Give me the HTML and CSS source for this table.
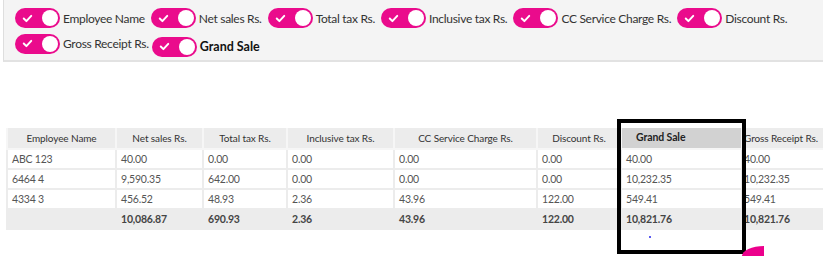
FILE: index.html
```html
<!DOCTYPE html>
<html lang="en">
  <head>
    <meta charset="UTF-8" />
    <title>Sales Report</title>
    <link rel="stylesheet" href="styles.css">
  </head>
  <body>
    <!-- Column toggles -->
    <div class="toggle-panel">
      <label class="toggle-item">
        <span class="switch"><svg class="tick" viewBox="0 0 14 12"><polyline points="2,6 5.5,9.5 12,2.5" /></svg><span class="knob"></span></span>
        <span class="toggle-label">Employee Name</span>
      </label>
      <label class="toggle-item">
        <span class="switch"><svg class="tick" viewBox="0 0 14 12"><polyline points="2,6 5.5,9.5 12,2.5" /></svg><span class="knob"></span></span>
        <span class="toggle-label">Net sales Rs.</span>
      </label>
      <label class="toggle-item">
        <span class="switch"><svg class="tick" viewBox="0 0 14 12"><polyline points="2,6 5.5,9.5 12,2.5" /></svg><span class="knob"></span></span>
        <span class="toggle-label">Total tax Rs.</span>
      </label>
      <label class="toggle-item">
        <span class="switch"><svg class="tick" viewBox="0 0 14 12"><polyline points="2,6 5.5,9.5 12,2.5" /></svg><span class="knob"></span></span>
        <span class="toggle-label">Inclusive tax Rs.</span>
      </label>
      <label class="toggle-item">
        <span class="switch"><svg class="tick" viewBox="0 0 14 12"><polyline points="2,6 5.5,9.5 12,2.5" /></svg><span class="knob"></span></span>
        <span class="toggle-label">CC Service Charge Rs.</span>
      </label>
      <label class="toggle-item">
        <span class="switch"><svg class="tick" viewBox="0 0 14 12"><polyline points="2,6 5.5,9.5 12,2.5" /></svg><span class="knob"></span></span>
        <span class="toggle-label">Discount Rs.</span>
      </label>
      <label class="toggle-item">
        <span class="switch"><svg class="tick" viewBox="0 0 14 12"><polyline points="2,6 5.5,9.5 12,2.5" /></svg><span class="knob"></span></span>
        <span class="toggle-label">Gross Receipt Rs.</span>
      </label>
      <label class="toggle-item toggle-new">
        <span class="switch"><svg class="tick" viewBox="0 0 14 12"><polyline points="2,6 5.5,9.5 12,2.5" /></svg><span class="knob"></span></span>
        <span class="toggle-label">Grand Sale</span>
      </label>
    </div>

    <!-- Report table -->
    <div class="report">
      <table class="report-table">
        <colgroup>
          <col style="width: 109px" />
          <col style="width: 87px" />
          <col style="width: 84px" />
          <col style="width: 107px" />
          <col style="width: 143px" />
          <col style="width: 84px" />
          <col style="width: 121px" />
          <col style="width: 86px" />
        </colgroup>
        <thead>
          <tr>
            <th>Employee Name</th>
            <th>Net sales Rs.</th>
            <th>Total tax Rs.</th>
            <th>Inclusive tax Rs.</th>
            <th>CC Service Charge Rs.</th>
            <th>Discount Rs.</th>
            <th class="grand-head">Grand Sale</th>
            <th class="gross">Gross Receipt Rs.</th>
          </tr>
        </thead>
        <tbody>
          <tr>
            <td>ABC 123</td><td>40.00</td><td>0.00</td><td>0.00</td><td>0.00</td><td>0.00</td><td class="grand">40.00</td><td class="gross">40.00</td>
          </tr>
          <tr>
            <td>6464 4</td><td>9,590.35</td><td>642.00</td><td>0.00</td><td>0.00</td><td>0.00</td><td class="grand">10,232.35</td><td class="gross">10,232.35</td>
          </tr>
          <tr>
            <td>4334 3</td><td>456.52</td><td>48.93</td><td>2.36</td><td>43.96</td><td>122.00</td><td class="grand">549.41</td><td class="gross">549.41</td>
          </tr>
        </tbody>
        <tfoot>
          <tr>
            <td></td><td>10,086.87</td><td>690.93</td><td>2.36</td><td>43.96</td><td>122.00</td><td class="grand">10,821.76</td><td class="gross">10,821.76</td>
          </tr>
        </tfoot>
      </table>
    </div>

    <!-- Highlight overlay -->
    <div class="highlight-box"></div>
    <div class="stray-dot"></div>
    <div class="fab-corner"></div>
  </body>
</html>
```

FILE: styles.css
```css
/* Base */
* {
  margin: 0;
  padding: 0;
  box-sizing: border-box;
}

body {
  font-family: Lato, "Open Sans", sans-serif;
  background: #ffffff;
  color: #444;
  overflow: hidden;
  width: 823px;
  height: 275px;
  position: relative;
}

/* Toggle panel */
.toggle-panel {
  margin-left: 3px;
  height: 62px;
  background: #f4f4f4;
  border-left: 1px solid #dedede;
  border-bottom: 2px solid #e2e2e2;
  padding: 8px 0 0 11px;
  display: flex;
  flex-wrap: wrap;
  align-items: flex-start;
  column-gap: 6px;
  row-gap: 2px;
}

.toggle-item {
  display: flex;
  align-items: center;
  gap: 3px;
  height: 20px;
}

.toggle-new {
  margin-top: 3px;
  margin-left: -3px;
}

.switch {
  width: 45px;
  height: 20px;
  border-radius: 10px;
  background: #ea0b8c;
  display: flex;
  align-items: center;
  justify-content: space-between;
  padding: 0 2px 0 7px;
}

.tick {
  width: 11px;
  height: 9px;
  fill: none;
  stroke: #ffffff;
  stroke-width: 2.6;
  stroke-linecap: round;
  stroke-linejoin: round;
}

.knob {
  width: 16px;
  height: 16px;
  border-radius: 50%;
  background: #ffffff;
}

.toggle-label {
  font-size: 12px;
  color: #333;
  letter-spacing: -0.3px;
}

.toggle-new .toggle-label {
  font-size: 12.5px;
  font-weight: 700;
  color: #111;
  letter-spacing: 0;
}

/* Report table */
.report {
  margin: 66px 0 0 6px;
}

.report-table {
  border-collapse: collapse;
  table-layout: fixed;
  width: 821px;
  font-size: 10.5px;
  letter-spacing: -0.2px;
}

.report-table th,
.report-table td {
  height: 20px;
  padding: 0 4px;
  border: 2px solid #ececec;
  text-align: left;
  white-space: nowrap;
  overflow: hidden;
  color: #555;
}

.report-table th {
  height: 21px;
  background: #ececec;
  border-color: #f6f6f6;
  border-top: none;
  text-align: center;
  font-size: 10px;
  letter-spacing: -0.1px;
  font-weight: 400;
  color: #333;
}

.report-table tfoot td {
  background: #ececec;
  font-weight: 700;
  color: #444;
  border-top-color: #e0e0e0;
}

.report-table .grand-head {
  background: #d2d2d2;
  text-align: left;
  padding: 0 0 3px 14px;
  font-size: 10.5px;
  font-weight: 700;
  color: #222;
}

.report-table .gross {
  padding-left: 1px;
}

.report-table th.gross {
  text-align: left;
}

/* Overlay marks */
.highlight-box {
  position: absolute;
  left: 617px;
  top: 119px;
  width: 129px;
  height: 135px;
  border: 4px solid #000;
}

.stray-dot {
  position: absolute;
  left: 649px;
  top: 236px;
  width: 2px;
  height: 2px;
  background: #5b5bf0;
}

.fab-corner {
  position: absolute;
  left: 742px;
  top: 246px;
  width: 22px;
  height: 10px;
  background: #ec008c;
  border-top-left-radius: 100% 100%;
}
```
